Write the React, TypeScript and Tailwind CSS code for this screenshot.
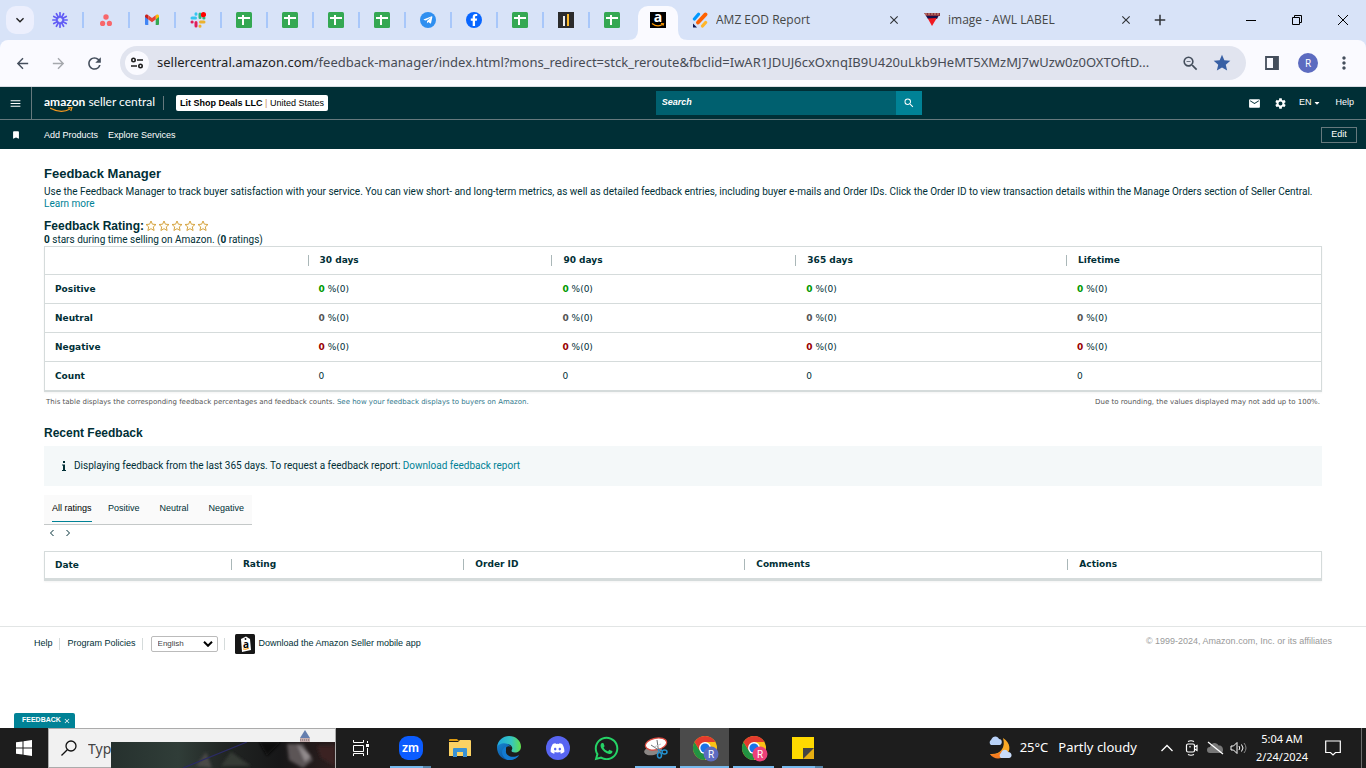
import React from "react";
import { FaDiscord, FaFacebookF, FaTelegramPlane, FaWhatsapp, FaCaretDown } from "react-icons/fa";
import { MdArrowBack, MdArrowForward, MdRefresh, MdMoreVert, MdStar, MdSettings, MdEmail, MdSearch, MdBookmark, MdZoomOut, MdAdd, MdClose, MdMenu, MdExpandMore } from "react-icons/md";

function SheetsIcon() {
  return (
    <svg className="size-4" viewBox="0 0 16 16" aria-hidden="true">
      <rect width="16" height="16" rx="1.5" fill="#34a853" />
      <path d="M7 3v10M2 6h12" stroke="#fff" strokeWidth="2" fill="none" />
    </svg>
  );
}

function BurstIcon() {
  const angles = [0, 30, 60, 90, 120, 150, 180, 210, 240, 270, 300, 330];
  return (
    <svg className="size-4" viewBox="0 0 16 16" aria-hidden="true">
      {angles.map((a) => (
        <path key={a} d="M8 5.2V.8" stroke="#625df5" strokeWidth="1.700" strokeLinecap="round" transform={`rotate(${a} 8 8)`} />
      ))}
      <circle cx="8" cy="8" r="3.400" fill="none" stroke="#625df5" strokeWidth="1.500" />
    </svg>
  );
}

function AsanaIcon() {
  return (
    <svg className="size-4" viewBox="0 0 16 16" fill="#f8676b" aria-hidden="true">
      <circle cx="8" cy="5" r="2.700" />
      <circle cx="4.600" cy="11.400" r="2.600" />
      <circle cx="11.400" cy="11.400" r="2.600" />
    </svg>
  );
}

function GmailIcon() {
  return (
    <svg className="size-4" viewBox="0 0 16 16" aria-hidden="true">
      <path d="M1 4.2 4.3 6.6V13H2.2C1.5 13 1 12.6 1 12Z" fill="#4285f4" />
      <path d="M15 4.2 11.7 6.6V13h2.1c.7 0 1.2-.4 1.2-1Z" fill="#34a853" />
      <path d="M1 5V4c0-1.500 1.600-2 2.600-1.200l.7.500v4.200Z" fill="#c5221f" />
      <path d="M15 5V4c0-1.500-1.600-2-2.600-1.200l-.7.500v4.200Z" fill="#fbbc04" />
      <path d="M4.300 3.300 8 6l3.700-2.700v4.200L8 10.200 4.300 7.500Z" fill="#ea4335" />
    </svg>
  );
}

function SlackIcon() {
  return (
    <svg className="size-4" viewBox="0 0 16 16" fill="none" strokeWidth="3" strokeLinecap="round" aria-hidden="true">
      <path d="M2 6h3.500M6 1.800v.4" stroke="#36c5f0" />
      <path d="M10 2v3.500M13.800 6h.2" stroke="#2eb67d" />
      <path d="M10.500 10H14M10 14.200v-.2" stroke="#ecb22e" />
      <path d="M6 10.500V14M2.200 10H2" stroke="#e01e5a" />
      <circle cx="13.500" cy="2.700" r="2.600" fill="#f00" />
    </svg>
  );
}

function BarsIcon() {
  return (
    <svg className="size-4" viewBox="0 0 16 16" aria-hidden="true">
      <rect width="16" height="16" fill="#2b2b2d" />
      <path d="M6 4v10" stroke="#eee" strokeWidth="2" />
      <path d="M10 2v12" stroke="#fbb829" strokeWidth="2" />
    </svg>
  );
}

function JotformIcon() {
  return (
    <svg className="size-4" viewBox="0 0 16 16" fill="none" strokeWidth="3.200" strokeLinecap="round" aria-hidden="true">
      <path d="M2.400 7 6.500 2.200" stroke="#0099ff" />
      <path d="M6 10.500 13.500 2.400" stroke="#ff6100" strokeWidth="3.800" />
      <path d="M10.500 14 13.600 10.500" stroke="#ffb629" />
      <path d="M1 11.500 5 15.500H1.500Q1 15.500 1 15Z" fill="#0a1551" />
    </svg>
  );
}

function AwlIcon() {
  return (
    <svg className="size-4" viewBox="0 0 16 16" aria-hidden="true">
      <path d="M0 1h16v3H2Z" fill="#8b3142" />
      <path d="M2 4h12.500l-1.500 3H4Z" fill="#16104a" />
      <path d="M3.800 6.500 12.800 6 8 14Z" fill="#f11a22" />
      <path d="M1 2h14" stroke="#d4a07a" strokeDasharray="2 1" />
    </svg>
  );
}

function Round({ className, children }: { className: string; children: React.ReactNode }) {
  return <span className={`flex size-4 items-center justify-center rounded-full text-white ${className}`}>{children}</span>;
}

const pinned: { name: string; icon: React.ReactNode }[] = [
  { name: "Clockify", icon: <BurstIcon /> },
  { name: "Asana", icon: <AsanaIcon /> },
  { name: "Gmail", icon: <GmailIcon /> },
  { name: "Slack", icon: <SlackIcon /> },
  { name: "Sheet 1", icon: <SheetsIcon /> },
  { name: "Sheet 2", icon: <SheetsIcon /> },
  { name: "Sheet 3", icon: <SheetsIcon /> },
  { name: "Sheet 4", icon: <SheetsIcon /> },
  { name: "Telegram", icon: <Round className="bg-[#2f8ff0]"><FaTelegramPlane size={10} /></Round> },
  { name: "Facebook", icon: <Round className="bg-[#0866ff]"><FaFacebookF size={12} /></Round> },
  { name: "Sheet 5", icon: <SheetsIcon /> },
  { name: "Reports", icon: <BarsIcon /> },
  { name: "Sheet 6", icon: <SheetsIcon /> },
];

function WideTab({ icon, title }: { icon: React.ReactNode; title: string }) {
  return (
    <div className="flex h-7 w-[232px] items-center gap-2 pr-3 pl-[11px]">
      {icon}
      <span className="flex-1 truncate text-xs text-[#454746]">{title}</span>
      <button aria-label={`Close ${title}`} className="text-[#303438]"><MdClose size={14} /></button>
    </div>
  );
}

function TabStrip() {
  return (
    <div className="flex h-10 items-center bg-[#d8e3f8] font-['Open_Sans',sans-serif]">
      <button aria-label="Search tabs" className="mr-[3px] ml-1.5 flex size-7 items-center justify-center rounded-[10px] bg-[#eceffd] text-[#1f1f1f]">
        <MdExpandMore size={16} />
      </button>
      {pinned.map((t, i) => (
        <button key={t.name} aria-label={t.name} className="relative flex h-4 w-[46px] items-center justify-center">
          {t.icon}
          {i < pinned.length - 1 && <span className="absolute -right-px h-4 w-0.5 bg-[#a8c7fa]" />}
        </button>
      ))}
      <div className="relative mx-[3px] flex h-[34px] w-10 justify-center self-end rounded-t-[10px] bg-[#fafaff] pt-1.5">
        <svg className="absolute bottom-0 -left-2.5 size-2.5" viewBox="0 0 10 10" aria-hidden="true"><path d="M10 0v10H0Q10 10 10 0" fill="#fafaff" /></svg>
        <svg className="absolute -right-2.5 bottom-0 size-2.5" viewBox="0 0 10 10" aria-hidden="true"><path d="M0 0v10h10Q0 10 0 0" fill="#fafaff" /></svg>
        <svg className="size-4 overflow-visible" viewBox="0 0 16 16" aria-hidden="true">
          <rect width="16" height="16" />
          <text x="8" y="10" textAnchor="middle" fill="#fff" fontSize="14" fontWeight="700" fontFamily="Open Sans">a</text>
          <path d="M2 11.500q6 4.500 11 .5m-2-.5 2.500.2-.5 2" stroke="#f90" strokeWidth="1.200" fill="none" />
        </svg>
      </div>
      <WideTab icon={<JotformIcon />} title="AMZ EOD Report" />
      <WideTab icon={<AwlIcon />} title="image - AWL LABEL" />
      <button aria-label="New tab" className="ml-1.5 text-[#303438]"><MdAdd size={18} /></button>
      <div className="ml-auto flex text-black">
        <button aria-label="Minimize" className="flex h-7 w-[46px] items-center justify-center">
          <svg className="size-3" viewBox="0 0 12 12"><path d="M1 6.500h10" stroke="currentColor" /></svg>
        </button>
        <button aria-label="Restore" className="flex h-7 w-[46px] items-center justify-center">
          <svg className="size-3" viewBox="0 0 12 12"><path d="M1.500 3.500h7v7h-7zM3.500 3.500v-2h7v7h-2" stroke="currentColor" fill="none" /></svg>
        </button>
        <button aria-label="Close window" className="flex h-7 w-[46px] items-center justify-center">
          <svg className="size-3" viewBox="0 0 12 12"><path d="m1 1 10 10M11 1 1 11" stroke="currentColor" /></svg>
        </button>
      </div>
    </div>
  );
}

function Toolbar() {
  return (
    <div className="bg-[#d8e3f8]">
      <div className="flex h-[47px] items-center rounded-t-lg border-b border-[#d9dce3] bg-[#fafaff] font-['Noto_Sans',sans-serif] text-[#444e5c]">
        <button aria-label="Back" className="flex w-11 justify-center"><MdArrowBack size={17} /></button>
        <button aria-label="Forward" className="flex w-7 justify-center text-[#a5a8ad]"><MdArrowForward size={17} /></button>
        <button aria-label="Reload" className="flex w-11 justify-center"><MdRefresh size={19} /></button>
        <div className="ml-1 flex h-[34px] min-w-0 flex-1 items-center rounded-full bg-[#e1e4ef] pr-3.5 pl-[5px]">
          <button aria-label="Site information" className="mr-2 flex size-6 shrink-0 items-center justify-center rounded-full bg-[#fafaff]">
            <svg className="size-3.5" viewBox="0 0 14 14" fill="none" stroke="#1f1f1f" strokeWidth="1.600" aria-hidden="true">
              <circle cx="3.500" cy="4" r="1.700" /><path d="M7 4h6M1 10h6" /><circle cx="10.500" cy="10" r="1.700" />
            </svg>
          </button>
          <span className="min-w-0 flex-1 text-[13px] whitespace-nowrap text-[#474b54]">
            <span className="text-[#1f1f1f]">sellercentral.amazon.com</span>/feedback-manager/index.html?mons_redirect=stck_reroute&amp;fbclid=IwAR1JDUJ6cxOxnqIB9U420uLkb9HeMT5XMzMJ7wUzw0z0OXTOftD...
          </span>
          <button aria-label="Zoom" className="ml-3"><MdZoomOut size={19} /></button>
          <button aria-label="Bookmark this tab" className="ml-3 text-[#3860a5]"><MdStar size={20} /></button>
        </div>
        <button aria-label="Side panel" className="ml-[18px] flex w-4 justify-center">
          <svg className="size-4" viewBox="0 0 16 16" aria-hidden="true"><path d="M2 2h12v12H2z" fill="none" stroke="currentColor" strokeWidth="1.800" /><path d="M9 2h5v12H9z" fill="currentColor" /></svg>
        </button>
        <button aria-label="Profile" className="ml-[18px] flex size-5 items-center justify-center rounded-full bg-[#5c6bc0] text-[10px] text-white">R</button>
        <button aria-label="Menu" className="mr-3 ml-4"><MdMoreVert size={20} /></button>
      </div>
    </div>
  );
}

function SellerHeader() {
  return (
    <header className="bg-[#002f36] font-['Liberation_Sans',Arial,sans-serif] text-[9px] text-white">
      <div className="relative flex h-[33px] items-center border-b border-[#66797d]">
        <button aria-label="Main menu" className="flex h-full w-8 items-center justify-center border-r border-[#66797d]"><MdMenu size={13} /></button>
        <a href="#home" className="relative ml-3 block pb-0.5 font-['Lato',sans-serif] text-xs leading-4 whitespace-nowrap">
          <b>amazon</b> seller central
          <svg className="absolute top-[13px] left-1.5 h-1.5 w-6" viewBox="0 0 24 6" fill="none" stroke="#f7981d" strokeWidth="1.200" aria-hidden="true">
            <path d="M0 1q11 6 20 1M18 .8l4-.3-1.200 3.500" />
          </svg>
        </a>
        <span className="ml-2 h-3.5 w-px bg-[#66797d]" />
        <button className="ml-3 h-4 rounded-xs bg-white px-1 leading-4 whitespace-nowrap text-black">
          <b>Lit Shop Deals LLC</b> <span className="text-[#c98b60]">|</span> United States
        </button>
        <form className="absolute left-[48%] flex h-6 w-[266px]" onSubmit={(e) => e.preventDefault()}>
          <input aria-label="Search" placeholder="Search" className="min-w-0 flex-1 bg-[#00606f] px-1.5 font-bold italic placeholder:text-white" />
          <button aria-label="Submit search" className="flex w-[26px] items-center justify-center bg-[#008296]"><MdSearch size={12} /></button>
        </form>
        <div className="ml-auto flex items-center pr-3">
          <button aria-label="Messages" className="mr-[13px]"><MdEmail size={13} /></button>
          <button aria-label="Settings" className="mr-3"><MdSettings size={13} /></button>
          <button className="mr-3.5 flex items-center gap-0.5">EN <FaCaretDown size={8} /></button>
          <a href="#help">Help</a>
        </div>
      </div>
      <nav className="flex h-[29px] items-center pr-[9px]">
        <button aria-label="Bookmarks" className="flex w-8 justify-center"><MdBookmark size={10} /></button>
        <a href="#add" className="ml-3 pt-0.5">Add Products</a>
        <a href="#services" className="ml-2.5 pt-0.5">Explore Services</a>
        <button className="ml-auto h-4 w-9 border border-[#66797d]">Edit</button>
      </nav>
    </header>
  );
}

const summary = [
  { label: "Positive", color: "text-[#090]" },
  { label: "Neutral", color: "text-[#555]" },
  { label: "Negative", color: "text-[#900]" },
];
const periods = ["30 days", "90 days", "365 days", "Lifetime"];

function HeadCell({ children }: { children: React.ReactNode }) {
  return (
    <th scope="col" className="h-7 p-0 text-left">
      <span className="block border-l border-[#aab7b8] pl-[11px] leading-[11px]">{children}</span>
    </th>
  );
}

function SummaryTable() {
  return (
    <table className="w-full table-fixed border border-b-2 border-[#d5dbdb] font-['DejaVu_Sans',Verdana,sans-serif] text-[9px] leading-3 shadow-xs">
      <colgroup>
        <col className="w-[20.600%]" />
        <col className="w-[19.100%]" />
        <col className="w-[19.100%]" />
        <col className="w-[21.200%]" />
        <col />
      </colgroup>
      <thead>
        <tr>
          <td className="h-7 p-0" />
          {periods.map((p) => <HeadCell key={p}>{p}</HeadCell>)}
        </tr>
      </thead>
      <tbody>
        {summary.map((r) => (
          <tr key={r.label} className="border-t border-[#d5dbdb]">
            <th scope="row" className="h-[29px] py-0 pl-2.5 text-left">{r.label}</th>
            {periods.map((p) => <td key={p} className="py-0 pl-[11px]"><b className={r.color}>0</b> %(0)</td>)}
          </tr>
        ))}
        <tr className="border-t border-[#d5dbdb]">
          <th scope="row" className="h-[29px] py-0 pl-2.5 text-left">Count</th>
          {periods.map((p) => <td key={p} className="py-0 pl-[11px]">0</td>)}
        </tr>
      </tbody>
    </table>
  );
}

function FeedbackPage() {
  return (
    <main className="px-11 pt-[15px] font-['Roboto',Verdana,sans-serif] text-[10px] leading-3 text-[#002f36]">
      <h1 className="font-['Liberation_Sans',Arial,sans-serif] text-[13px] leading-5 font-bold">Feedback Manager</h1>
      <p className="mt-0.5">
        Use the Feedback Manager to track buyer satisfaction with your service. You can view short- and long-term metrics, as well as detailed feedback entries, including buyer e-mails and Order IDs. Click the Order ID to view transaction details within the Manage Orders section of Seller Central.{" "}
        <a href="#learn" className="block w-fit text-[#008296]">Learn more</a>
      </p>
      <div className="mt-2 flex items-center">
        <h2 className="font-['Liberation_Sans',Arial,sans-serif] text-xs leading-4 font-bold">Feedback Rating:</h2>
        <span className="ml-px flex gap-px" role="img" aria-label="0 stars">
          {[1, 2, 3, 4, 5].map((s) => (
            <svg key={s} className="size-3" viewBox="0 0 12 12" aria-hidden="true">
              <path d="m6 1 1.400 3.200 3.600.3-2.700 2.400.8 3.600L6 8.700l-3.100 1.800.8-3.600L1 4.500l3.600-.3Z" fill="#fffdf5" stroke="#d6a441" />
            </svg>
          ))}
        </span>
      </div>
      <p><b>0</b> stars during time selling on Amazon. (<b>0</b> ratings)</p>
      <SummaryTable />
      <div className="mt-1 flex justify-between px-0.5 font-['DejaVu_Sans',Verdana,sans-serif] text-[7px] text-[#555]">
        <p>This table displays the corresponding feedback percentages and feedback counts. <a href="#display" className="text-[#31788c]">See how your feedback displays to buyers on Amazon.</a></p>
        <p>Due to rounding, the values displayed may not add up to 100%.</p>
      </div>
      <h2 className="mt-4 font-['Liberation_Sans',Arial,sans-serif] text-xs leading-[18px] font-bold">Recent Feedback</h2>
      <div className="mt-1 flex h-10 items-center bg-[#f4f8f9] pl-[18px]">
        <svg className="h-2.5 w-1 text-[#002f36]" viewBox="0 0 4 10" fill="currentColor" aria-hidden="true"><path d="M1 0h2v2H1zM0 3.500h3V9h1v1H0V9h1V4.500H0z" /></svg>
        <p className="ml-2">Displaying feedback from the last 365 days. To request a feedback report: <a href="#download" className="text-[#008296]">Download feedback report</a></p>
      </div>
      <div role="tablist" className="mt-[9px] flex h-[30px] w-52 gap-4 border-b border-[#c4c8c8] bg-[#fafafa] px-2 font-['Liberation_Sans',Arial,sans-serif] text-[9px]">
        <button role="tab" aria-selected="true" className="h-[27px] w-[42px] border-b border-[#008296] text-left whitespace-nowrap text-black">All ratings</button>
        <button role="tab" aria-selected="false" className="h-[27px]">Positive</button>
        <button role="tab" aria-selected="false" className="ml-1 h-[27px]">Neutral</button>
        <button role="tab" aria-selected="false" className="ml-1 h-[27px]">Negative</button>
      </div>
      <div className="mt-1 flex gap-3 pl-1.5">
        {["Previous", "Next"].map((n) => (
          <button key={n} aria-label={n} className="h-2 w-1">
            <svg className="h-2 w-1" viewBox="0 0 4 8" fill="none" stroke="#002f36" aria-hidden="true"><path d={n === "Next" ? "M.5 1 3.500 4 .5 7" : "M3.500 1 .5 4l3 3"} /></svg>
          </button>
        ))}
      </div>
      <table className="mt-3.5 w-full table-fixed border border-b-3 border-[#d5dbdb] font-['DejaVu_Sans',Verdana,sans-serif] text-[9px] shadow-xs">
        <colgroup>
          <col className="w-[14.600%]" />
          <col className="w-[18.200%]" />
          <col className="w-[22%]" />
          <col className="w-[25.300%]" />
          <col />
        </colgroup>
        <thead>
          <tr>
            <th scope="col" className="h-7 py-0 pl-2.5 text-left">Date</th>
            {["Rating", "Order ID", "Comments", "Actions"].map((h) => <HeadCell key={h}>{h}</HeadCell>)}
          </tr>
        </thead>
      </table>
    </main>
  );
}

function SellerFooter() {
  return (
    <footer className="mt-[45px] flex h-9 items-center border-t border-[#e2e5e5] px-[34px] font-['Liberation_Sans',Arial,sans-serif] text-[9px] text-[#002f36]">
      <a href="#help">Help</a>
      <span className="mr-2 ml-1.5 h-3 w-px bg-[#d5dbdb]" />
      <a href="#policies">Program Policies</a>
      <span className="mr-2 ml-1.5 h-3 w-px bg-[#d5dbdb]" />
      <div className="relative flex">
        <select aria-label="Language" className="h-4 w-[67px] appearance-none rounded-xs border border-[#bbb] bg-white pl-1.5 text-[8px] text-[#444]">
          <option>English</option>
        </select>
        <svg className="pointer-events-none absolute top-[5px] right-[5px] h-1.5 w-2.5" viewBox="0 0 10 6" fill="none" stroke="#000" strokeWidth="2" aria-hidden="true"><path d="m1 .8 4 4 4-4" /></svg>
      </div>
      <span className="mr-2.5 ml-1.5 h-3 w-px bg-[#d5dbdb]" />
      <a href="#app" className="flex items-center gap-1">
        <svg className="size-5" viewBox="0 0 20 20" aria-hidden="true">
          <rect width="20" height="20" rx="1.500" fill="#161616" />
          <path d="m6 5 5-2.500L15 5l1 11-9 2Z" fill="#fff" />
          <circle cx="10.500" cy="5" r=".9" fill="#161616" />
          <text x="11" y="13.500" textAnchor="middle" fontSize="10" fontWeight="700" fontFamily="Open Sans">a</text>
          <path d="M8 15q3 1 6-1" fill="none" stroke="#f90" />
        </svg>
        Download the Amazon Seller mobile app
      </a>
      <span className="ml-auto pb-1 text-[#999]">© 1999-2024, Amazon.com, Inc. or its affiliates</span>
    </footer>
  );
}

function ChromeIcon({ badge }: { badge: string }) {
  return (
    <svg className="size-7" viewBox="0 0 28 28" aria-hidden="true">
      <circle cx="14" cy="14" r="12" fill="#fbc116" />
      <path d="M3.600 8A12 12 0 0 0 14 26L18 16 8.500 16Z" fill="#229342" />
      <path d="M14 8h10.400A12 12 0 0 0 3.600 8L8.600 16.500Z" fill="#e33b2e" />
      <circle cx="14" cy="14" r="6" fill="#fff" />
      <circle cx="14" cy="14" r="4.600" fill="#1a73e8" />
      <circle cx="20" cy="20" r="7.500" fill={badge} />
      <text x="20" y="23.500" textAnchor="middle" fill="#fff" fontSize="10" fontFamily="Roboto">R</text>
    </svg>
  );
}

function EdgeIcon() {
  return (
    <svg className="size-6" viewBox="0 0 24 24" aria-hidden="true">
      <defs>
        <linearGradient id="edgeTop" x1="0" x2="1"><stop offset="0" stopColor="#1ea7e0" /><stop offset=".6" stopColor="#36c6c0" /><stop offset="1" stopColor="#62df4b" /></linearGradient>
        <linearGradient id="edgeLow" x1="0" x2="1" y1="0" y2="1"><stop offset="0" stopColor="#1584cf" /><stop offset="1" stopColor="#0a3f8f" /></linearGradient>
      </defs>
      <path d="M0 11C1 4 6 0 12 0c7 0 12 5 12 10.500 0 4-3 6-6 6-3.500 0-4-1.500-3-3C17 9 9 5 0 11Z" fill="url(#edgeTop)" />
      <path d="M0 11c3-5 11-5 14 0-4-2-6 1-6 4 0 5 5 7 10 6 2-.3 4-1.500 4-1.500C20 22 16.500 24 12 24 5 24 0 18.500 0 11Z" fill="url(#edgeLow)" />
      <path d="M9 10.500C3 13 4 21 10.500 23.900 16 25 21 21.500 22 19c-6 4-14 1-13-4Z" fill="#137ad0" />
    </svg>
  );
}

function FolderIcon() {
  return (
    <svg className="h-5 w-[22px]" viewBox="0 0 22 20" aria-hidden="true">
      <path d="M0 1.500Q0 1 1 1h7l2 2H0Z" fill="#dd9a10" />
      <path d="M0 4h9l2-2h10q1 0 1 1v15H0Z" fill="#fcd263" />
      <path d="M4 11q0-1 1-1h12q1 0 1 1v8h-4v-5H8v5H4Z" fill="#3a92d4" />
    </svg>
  );
}

function SnipIcon() {
  return (
    <svg className="h-[22px] w-6" viewBox="0 0 24 22" aria-hidden="true">
      <ellipse cx="9" cy="13.500" rx="9" ry="4.500" fill="#8b8785" transform="rotate(-12 9 13.500)" />
      <ellipse cx="12" cy="7" rx="10.800" ry="5.800" fill="#fff" stroke="#db4a40" strokeWidth="1.200" transform="rotate(-12 12 7)" />
      <path d="m13 3 1.500 11M7 8l9 6" stroke="#6a6d70" fill="none" />
      <path d="m10 10 7-3" stroke="#c4c6c8" />
      <path d="m14 12 1.500 4M15 12.500l4 1.500" stroke="#2591cf" />
      <ellipse cx="15.500" cy="18.300" rx="2" ry="2.700" fill="none" stroke="#2591cf" strokeWidth="1.500" />
      <ellipse cx="20.500" cy="15" rx="2.500" ry="2" fill="none" stroke="#2591cf" strokeWidth="1.500" />
    </svg>
  );
}

const apps: { name: string; icon: React.ReactNode; line?: "one" | "many" | "active" }[] = [
  { name: "Zoom", line: "many", icon: <span className="flex size-6 items-center justify-center rounded-[9px] bg-[#0b5cff] pb-0.5 font-['Lato',sans-serif] text-[13px] leading-none font-bold">zm</span> },
  { name: "File Explorer", icon: <FolderIcon /> },
  { name: "Edge", icon: <EdgeIcon /> },
  { name: "Discord", icon: <span className="flex size-6 items-center justify-center rounded-full bg-[#5865f2]"><FaDiscord size={15} /></span> },
  { name: "WhatsApp", icon: <FaWhatsapp size={27} color="#25d366" /> },
  { name: "Snipping Tool", line: "one", icon: <SnipIcon /> },
  { name: "Chrome", line: "active", icon: <ChromeIcon badge="#5c6bc0" /> },
  { name: "Chrome, second profile", line: "one", icon: <ChromeIcon badge="#ec407a" /> },
  { name: "Sticky Notes", line: "many", icon: (
    <svg className="size-[22px]" viewBox="0 0 22 22" aria-hidden="true"><path d="M0 0h22v11L11 22H0Z" fill="#ffd900" /><path d="M11 22V11h11v11Z" fill="#e7ae12" /><path d="M11 11h11L11 22Z" fill="#444" /></svg>
  ) },
];

function Taskbar() {
  return (
    <div className="flex h-10 items-center bg-[#1d1d1d] font-['Noto_Sans',sans-serif] text-white">
      <button aria-label="Start" className="flex w-12 justify-center">
        <svg className="size-4" viewBox="0 0 16 16" fill="#fff" aria-hidden="true"><path d="M0 2.300 6.500 1.400v6.100H0zM7.500 1.200 16 0v7.500H7.500zM0 8.500h6.500v6.100L0 13.700zM7.500 8.500H16V16l-8.500-1.200z" /></svg>
      </button>
      <div className="relative flex h-full w-72 items-center border border-[#ababab] bg-[#f1f1f1]">
        <svg className="ml-3 size-4 shrink-0" viewBox="0 0 16 16" fill="none" stroke="#111" strokeWidth="1.300" aria-hidden="true"><circle cx="10" cy="6" r="5" /><path d="m6.300 9.700-5.800 5.800" /></svg>
        <input aria-label="Search Windows" placeholder="Typ" className="ml-[11px] h-full min-w-0 flex-1 bg-transparent text-sm placeholder:text-[#444]" />
        <svg className="absolute right-6 bottom-[25px] h-3 w-3" viewBox="0 0 12 12" aria-hidden="true"><path d="m6 0 5 8H1Z" fill="#667fae" /><path d="M1 8h10v4H1Z" fill="#c7b0b0" /><path d="M1 10h10" stroke="#7b6a70" strokeDasharray="1 1" /></svg>
        <svg className="absolute right-0 -bottom-px h-[26px] w-56" viewBox="0 0 224 26" preserveAspectRatio="none" aria-hidden="true">
          <defs>
            <linearGradient id="photo"><stop offset="0" stopColor="#26312e" /><stop offset=".3" stopColor="#303d38" /><stop offset=".5" stopColor="#222624" /><stop offset=".75" stopColor="#171718" /><stop offset="1" stopColor="#2b1d1d" /></linearGradient>
            <filter id="soft"><feGaussianBlur stdDeviation="1.500" /></filter>
          </defs>
          <rect width="224" height="26" fill="url(#photo)" />
          <g filter="url(#soft)">
            <path d="m85 24 10-14 6 16Z" fill="#4a4846" />
            <path d="m148 0 22 0-14 14Z" fill="#0a0a0b" />
            <path d="m176 2 16 0 10 16-10 8-14-8Z" fill="#5b5456" />
            <path d="m186 2 8 18 6-6Z" fill="#918a8c" />
            <path d="m206 4 18 0v20l-14-8Z" fill="#3b2020" />
            <path d="m120 10 20 14h-30Z" fill="#363b36" />
          </g>
          <path d="M72 26 136 0" stroke="#2b2b66" strokeWidth="1.200" />
        </svg>
      </div>
      <button aria-label="Task view" className="flex w-[50px] justify-center">
        <svg className="h-4 w-[18px]" viewBox="0 0 18 16" fill="none" stroke="#fff" aria-hidden="true"><path d="M1.500 0v2.500h10V0M1.500 5.500h10v6h-10zM1.500 16v-2.500h10V16M15.500 1v2M15.500 8v7" /><path d="M14 4h3v3h-3z" fill="#fff" stroke="none" /></svg>
      </button>
      {apps.map((a) => (
        <button key={a.name} aria-label={a.name} className={`relative flex h-full w-[49px] items-center justify-center ${a.line === "active" ? "bg-[#4b4b4b]" : ""}`}>
          {a.icon}
          {a.line === "active" && <span className="absolute inset-x-0 bottom-0 h-0.5 bg-[#76b9ed]" />}
          {a.line === "one" && <span className="absolute inset-x-1 bottom-0 h-0.5 bg-[#76b9ed]" />}
          {a.line === "many" && <span className="absolute inset-x-1 bottom-0 h-0.5 border-r-8 border-[#5484a8] bg-[#76b9ed]" />}
        </button>
      ))}
      <div className="ml-auto flex h-full items-center">
        <button className="flex items-center text-[13px] whitespace-nowrap">
          <svg className="mr-2 h-6 w-6" viewBox="0 0 24 24" aria-hidden="true">
            <path d="M15 2c8 5 8 13 3 17-5 4-12 3-16-1 10 1 16-6 13-16Z" fill="#f9a825" />
            <path d="M2 18c5 1 9 0 12-4l3 6c-5 4-12 3-15-2Z" fill="#f57c20" />
            <path d="M3 9a3 3 0 0 1 0-5C5-1 10 0 11 3c3 0 4 4 1 6Z" fill="#b9d2f8" />
            <path d="M13 22a3 3 0 0 1 0-5c1-4 6-4 7-1 4 0 5 5 1 6Z" fill="#c9dcfa" />
          </svg>
          <span>25°C</span>
          <span className="ml-2.5">Partly cloudy</span>
        </button>
        <button aria-label="Show hidden icons" className="ml-6">
          <svg className="h-2 w-3" viewBox="0 0 12 8" fill="none" stroke="#fff" strokeWidth="1.300"><path d="m.5 7 5.500-5.500L11.500 7" /></svg>
        </button>
        <svg className="ml-2.5 size-4" viewBox="0 0 16 16" fill="none" stroke="#fff" strokeWidth="1.200" aria-hidden="true"><path d="M5 1.500q3-1.500 6 0M5 14.500q3 1.500 6 0" /><rect x="3.500" y="4" width="8" height="8" rx="1.500" /><path d="M11.500 7l2.500-1.500v5L11.500 9" /><path d="M7 6v1.500" /></svg>
        <svg className="ml-2 h-4 w-[17px]" viewBox="0 0 17 16" aria-hidden="true"><path d="M3 13a3 3 0 0 1 0-6c1-5 7-5 8.500-1.500C15 5 16 8 16 10c0 2-1 3-2 3Z" fill="#777" /><path d="m1 2 15 12" stroke="#fff" strokeWidth="1.300" /></svg>
        <svg className="ml-1.5 h-4 w-[17px]" viewBox="0 0 17 16" fill="none" stroke="#fff" aria-hidden="true"><path d="M1 6h2.500L7 2.500v11L3.500 10H1ZM9 6q1.500 2 0 4M11.500 4.500q3 3.500 0 7" /><path d="M14 3q4 5 0 10" stroke="#888" /></svg>
        <div className="mr-2.5 ml-2 w-[54px] text-center text-[11px] leading-[18px] whitespace-nowrap">
          <div>5:04 AM</div>
          <div>2/24/2024</div>
        </div>
        <button aria-label="Notifications" className="ml-1.5">
          <svg className="size-4" viewBox="0 0 16 16" fill="none" stroke="#fff" strokeWidth="1.200"><path d="M.7 1h14.600v11.500H10.500L8 15l-2.500-2.500H.7Z" /></svg>
        </button>
        <span className="mr-1 ml-5 h-full w-px bg-[#6d6d6d]" />
      </div>
    </div>
  );
}

export default function App() {
  return (
    <div className="flex min-h-screen flex-col bg-white">
      <TabStrip />
      <Toolbar />
      <SellerHeader />
      <FeedbackPage />
      <SellerFooter />
      <div className="mt-auto flex pl-3.5">
        <button className="flex h-[15px] items-center gap-0.5 rounded-t-xs bg-[#008296] pr-1 pl-2 font-['Liberation_Sans',Arial,sans-serif] text-[7px] font-bold text-white">
          FEEDBACK <MdClose size={8} />
        </button>
      </div>
      <Taskbar />
    </div>
  );
}
